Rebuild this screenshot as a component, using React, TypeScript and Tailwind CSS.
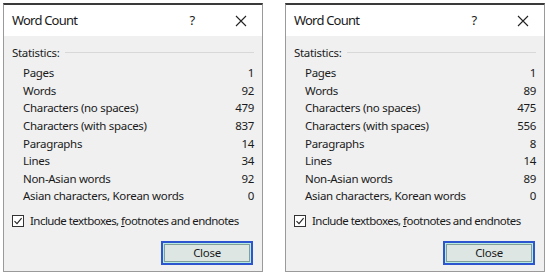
import React from "react";

type Row = [string, string];

const left: Row[] = [
  ["Pages", "1"],
  ["Words", "92"],
  ["Characters (no spaces)", "479"],
  ["Characters (with spaces)", "837"],
  ["Paragraphs", "14"],
  ["Lines", "34"],
  ["Non-Asian words", "92"],
  ["Asian characters, Korean words", "0"],
];
const right: Row[] = [
  ["Pages", "1"],
  ["Words", "89"],
  ["Characters (no spaces)", "475"],
  ["Characters (with spaces)", "556"],
  ["Paragraphs", "8"],
  ["Lines", "14"],
  ["Non-Asian words", "89"],
  ["Asian characters, Korean words", "0"],
];

function Dialog({ rows }: { rows: Row[] }) {
  return (
    <div className="w-[260px] h-[269px] shrink-0 flex flex-col border border-[#9a9a9a] border-t-[#3a3a3a] border-t-2 bg-[#f0f0f0] overflow-hidden">
      <div className="h-[31px] shrink-0 bg-white flex items-center pl-[8px] text-[13px] tracking-[-0.8px] text-[#1a1a1a]">
        <span className="flex-1">Word Count</span>
        <span className="w-[10px] text-center mr-[38px] text-[13px]">?</span>
        <svg width="12" height="12" viewBox="0 0 12 12" className="mr-[15px]">
          <path d="M1 1 L11 11 M11 1 L1 11" stroke="#222" strokeWidth="1.1" />
        </svg>
      </div>
      <div className="flex flex-col px-[8px] pt-[8.5px] text-[11.5px] tracking-[-0.3px] text-[#1a1a1a]">
        <div className="flex items-center h-[17px] shrink-0">
          <span>Statistics:</span>
          <div className="flex-1 ml-[6px] h-px bg-[#d8d8d8] mb-[2px]" />
        </div>
        <div className="flex flex-col pl-[11px] mt-[2.5px]">
          {rows.map(([k, v]) => (
            <div key={k} className="flex justify-between h-[17.6px] shrink-0 items-center">
              <span>{k}</span>
              <span>{v}</span>
            </div>
          ))}
        </div>
        <div className="flex items-center h-[14px] mt-[9px] whitespace-nowrap">
          <div className="w-[12px] h-[12px] shrink-0 border border-[#333] bg-white flex items-center justify-center mr-[6px]">
            <svg width="10" height="10" viewBox="0 0 10 10">
              <path d="M1.5 5.2 L4 7.7 L8.6 2.2" fill="none" stroke="#222" strokeWidth="1.1" />
            </svg>
          </div>
          <span className="tracking-[-0.55px]">
            Include textboxes, <span className="underline">f</span>ootnotes and endnotes
          </span>
        </div>
        <div className="flex justify-end mt-[13px] pr-[1px]">
          <div className="w-[92px] h-[24px] border-2 border-[#2d55d0] p-px bg-[#b8ece0]">
            <div className="w-full h-full border border-[#7f9f98] bg-[#dde6e3] flex items-center justify-center">
              Close
            </div>
          </div>
        </div>
      </div>
    </div>
  );
}

export default function App() {
  return (
    <div
      className="w-[550px] h-[277px] bg-white flex gap-[22px] pl-[3px] pt-[3px]"
      style={{ fontFamily: '"Noto Sans", "Open Sans", sans-serif' }}
    >
      <Dialog rows={left} />
      <Dialog rows={right} />
    </div>
  );
}
